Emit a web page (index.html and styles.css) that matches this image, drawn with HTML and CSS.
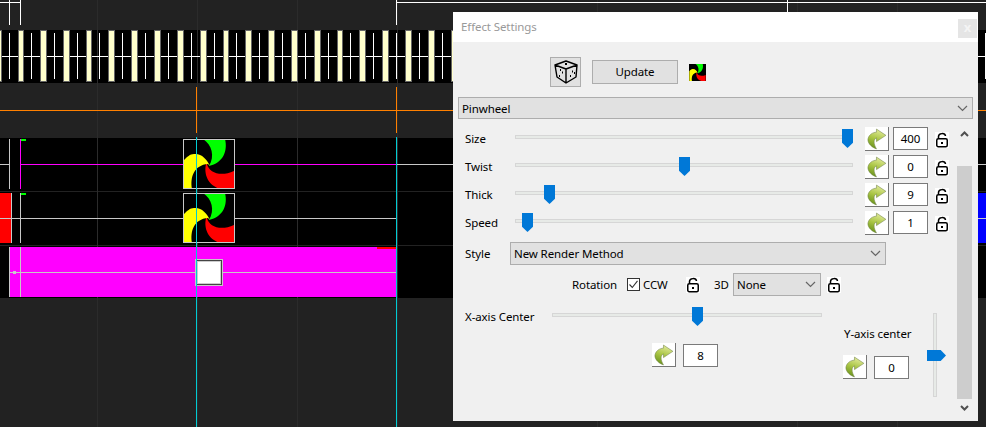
FILE: index.html
```html
<!DOCTYPE html>
<html lang="en">
<head>
  <meta charset="UTF-8">
  <title>Effect Settings</title>
  <link rel="stylesheet" href="styles.css">
</head>
<body>

<svg class="timeline" width="986" height="427" viewBox="0 0 986 427">
  <defs>
    <g id="pinwheel">
      <rect width="52" height="50" fill="#000"/>
      <path fill="#0f0" d="M20 0H42C45 12 40 24 26 27C32 17 29 6 20 0Z"/>
      <path fill="#f00" d="M24 25C26 34 38 38 51 32V50H38C28 48 20 38 23 25Z"/>
      <path fill="#ff0" d="M27 27C24 20 18 14 11 15C7 15 4 18 1 21V50H9C7 38 11 26 25 25Z"/>
    </g>
  </defs>

  <!-- rows -->
  <rect class="black" x="0" y="30" width="986" height="53"/>
  <rect class="black" x="0" y="138" width="986" height="53"/>
  <rect class="black" x="0" y="192" width="986" height="53"/>
  <rect class="black" x="0" y="246" width="986" height="52"/>

  <!-- grid -->
  <rect class="grid" x="97" y="0" width="1" height="427"/>
  <rect class="grid" x="197" y="0" width="1" height="427"/>
  <rect class="grid" x="297" y="0" width="1" height="427"/>
  <rect class="grid" x="397" y="0" width="1" height="427"/>
  <rect class="grid" x="597" y="0" width="1" height="427"/>
  <rect class="grid" x="797" y="0" width="1" height="427"/>
  <rect class="grid" x="897" y="0" width="1" height="427"/>

  <!-- top marks -->
  <rect class="mark" x="0" y="2" width="21" height="1"/>
  <rect class="mark" x="9" y="0" width="1" height="25"/>
  <rect class="mark" x="20" y="0" width="1" height="25"/>
  <rect class="mark" x="396" y="2" width="590" height="1"/>
  <rect class="mark" x="396" y="0" width="1" height="25"/>
  <rect class="mark" x="787" y="0" width="1" height="12"/>

  <!-- timing track -->
  <rect class="mark" x="0" y="56" width="986" height="1"/>
  <rect class="mark" x="9" y="33" width="1" height="46"/>
  <rect class="mark" x="31" y="33" width="1" height="46"/>
  <rect class="mark" x="54" y="33" width="1" height="46"/>
  <rect class="mark" x="77" y="33" width="1" height="46"/>
  <rect class="mark" x="99" y="33" width="1" height="46"/>
  <rect class="mark" x="122" y="33" width="1" height="46"/>
  <rect class="mark" x="145" y="33" width="1" height="46"/>
  <rect class="mark" x="168" y="33" width="1" height="46"/>
  <rect class="mark" x="191" y="33" width="1" height="46"/>
  <rect class="mark" x="214" y="33" width="1" height="46"/>
  <rect class="mark" x="236" y="33" width="1" height="46"/>
  <rect class="mark" x="259" y="33" width="1" height="46"/>
  <rect class="mark" x="282" y="33" width="1" height="46"/>
  <rect class="mark" x="305" y="33" width="1" height="46"/>
  <rect class="mark" x="328" y="33" width="1" height="46"/>
  <rect class="mark" x="350" y="33" width="1" height="46"/>
  <rect class="mark" x="373" y="33" width="1" height="46"/>
  <rect class="mark" x="396" y="33" width="1" height="46"/>
  <rect class="mark" x="419" y="33" width="1" height="46"/>
  <rect class="mark" x="442" y="33" width="1" height="46"/>
  <rect class="mark" x="985" y="33" width="1" height="46"/>

  <rect class="beat" x="-4.5" y="30.5" width="6" height="51"/>
  <rect class="beat" x="18.5" y="30.5" width="5" height="51"/>
  <rect class="beat" x="40.5" y="30.5" width="6" height="51"/>
  <rect class="beat" x="63.5" y="30.5" width="6" height="51"/>
  <rect class="beat" x="86.5" y="30.5" width="5" height="51"/>
  <rect class="beat" x="108.5" y="30.5" width="6" height="51"/>
  <rect class="beat" x="131.5" y="30.5" width="6" height="51"/>
  <rect class="beat" x="154.5" y="30.5" width="6" height="51"/>
  <rect class="beat" x="177.5" y="30.5" width="6" height="51"/>
  <rect class="beat" x="200.5" y="30.5" width="6" height="51"/>
  <rect class="beat" x="223.5" y="30.5" width="5" height="51"/>
  <rect class="beat" x="245.5" y="30.5" width="6" height="51"/>
  <rect class="beat" x="268.5" y="30.5" width="6" height="51"/>
  <rect class="beat" x="291.5" y="30.5" width="6" height="51"/>
  <rect class="beat" x="314.5" y="30.5" width="6" height="51"/>
  <rect class="beat" x="337.5" y="30.5" width="5" height="51"/>
  <rect class="beat" x="359.5" y="30.5" width="6" height="51"/>
  <rect class="beat" x="382.5" y="30.5" width="6" height="51"/>
  <rect class="beat" x="405.5" y="30.5" width="6" height="51"/>
  <rect class="beat" x="428.5" y="30.5" width="6" height="51"/>
  <rect class="beat" x="451.5" y="30.5" width="6" height="51"/>

  <!-- orange marker -->
  <rect class="orange" x="0" y="110" width="986" height="1"/>
  <rect class="orange" x="196" y="87" width="1" height="46"/>
  <rect class="orange" x="396" y="87" width="1" height="46"/>

  <!-- row 1 -->
  <rect class="line" x="0" y="164" width="9" height="1"/>
  <rect class="line" x="9" y="139" width="1" height="50"/>
  <rect class="pink" x="20" y="139" width="1" height="50"/>
  <rect class="green" x="21" y="139" width="5" height="2"/>
  <rect class="pink" x="20" y="164" width="376" height="1"/>
  <rect class="line" x="396" y="164" width="590" height="1"/>
  <use href="#pinwheel" x="183" y="139"/>
  <rect class="frame" x="183.5" y="139.5" width="51" height="49"/>

  <!-- row 2 -->
  <rect class="red" x="0" y="193" width="11" height="50"/>
  <rect class="line" x="11" y="193" width="1" height="50"/>
  <rect class="line" x="0" y="218" width="396" height="1"/>
  <rect class="line" x="20" y="193" width="1" height="50"/>
  <rect class="green" x="21" y="193" width="5" height="2"/>
  <use href="#pinwheel" x="183" y="193"/>
  <rect class="frame" x="183.5" y="193.5" width="51" height="49"/>
  <rect class="blue" x="978" y="193" width="8" height="50"/>
  <rect class="line" x="978" y="218" width="8" height="1"/>

  <!-- row 3 -->
  <rect class="pink" x="9" y="247" width="387" height="50"/>
  <rect class="line" x="9" y="247" width="1" height="50"/>
  <rect class="line" x="20" y="247" width="1" height="50"/>
  <rect class="line" x="9" y="272" width="387" height="1"/>
  <rect class="frame" x="13.5" y="271.5" width="2" height="2"/>
  <rect class="red" x="377" y="247" width="19" height="2"/>
  <rect class="line" x="195" y="259" width="28" height="27"/>
  <rect fill="#444" x="196" y="260" width="26" height="25"/>
  <rect fill="#ccc" x="197" y="261" width="24" height="23"/>
  <rect fill="#fff" x="198" y="262" width="22" height="21"/>

  <!-- playhead -->
  <rect class="cyan" x="196" y="137" width="1" height="290"/>
  <rect class="cyan" x="396" y="137" width="1" height="290"/>
</svg>

<div class="dialog">
  <div class="dialog-title">
    <span>Effect Settings</span>
    <div class="close-btn">x</div>
  </div>
  <div class="dialog-body">
    <div class="toolbar">
      <div class="dice-btn">
        <svg width="24" height="24" viewBox="3 3 24 24" fill="none" stroke="#000" stroke-width="1.4" stroke-linejoin="round">
          <path d="M15 4L26 8L25 20L15 26L6 20L4 8ZM4 8L15 12L26 8M15 12V26"/>
          <path stroke-width="2" d="M14 7h2M9 13h1M11 15.5h1M8 19h1M21 14.5h1M19 19h1M23 16h1"/>
        </svg>
      </div>
      <div class="update-btn">Update</div>
      <svg class="effect-icon" width="17" height="17" viewBox="0 0 52 50" preserveAspectRatio="none"><use href="#pinwheel"/></svg>
    </div>

    <div class="combo combo-effect">
      <span>Pinwheel</span>
      <svg class="chevron" width="11" height="7" viewBox="0 0 11 7"><path d="M1 1L5.5 5.5L10 1" fill="none" stroke="#666" stroke-width="1.2"/></svg>
    </div>

    <div class="panel">
      <div class="settings">
        <div class="slider-row">
          <label class="row-label">Size</label>
          <div class="slider"><div class="track"></div><div class="thumb" style="left: 327px"></div></div>
          <button class="arrow-btn"><svg width="22" height="22" viewBox="1 1 21 21"><use href="#arrow"/></svg></button>
          <input class="num" type="text" value="400">
          <svg class="lock" width="14" height="16" viewBox="0 0 14 16"><use href="#lock"/></svg>
        </div>
        <div class="slider-row">
          <label class="row-label">Twist</label>
          <div class="slider"><div class="track"></div><div class="thumb" style="left: 164px"></div></div>
          <button class="arrow-btn"><svg width="22" height="22" viewBox="1 1 21 21"><use href="#arrow"/></svg></button>
          <input class="num" type="text" value="0">
          <svg class="lock" width="14" height="16" viewBox="0 0 14 16"><use href="#lock"/></svg>
        </div>
        <div class="slider-row">
          <label class="row-label">Thick</label>
          <div class="slider"><div class="track"></div><div class="thumb" style="left: 29px"></div></div>
          <button class="arrow-btn"><svg width="22" height="22" viewBox="1 1 21 21"><use href="#arrow"/></svg></button>
          <input class="num" type="text" value="9">
          <svg class="lock" width="14" height="16" viewBox="0 0 14 16"><use href="#lock"/></svg>
        </div>
        <div class="slider-row">
          <label class="row-label">Speed</label>
          <div class="slider"><div class="track"></div><div class="thumb" style="left: 7px"></div></div>
          <button class="arrow-btn"><svg width="22" height="22" viewBox="1 1 21 21"><use href="#arrow"/></svg></button>
          <input class="num" type="text" value="1">
          <svg class="lock" width="14" height="16" viewBox="0 0 14 16"><use href="#lock"/></svg>
        </div>

        <div class="style-row">
          <label class="style-label">Style</label>
          <div class="combo combo-style">
            <span>New Render Method</span>
            <svg class="chevron" width="11" height="7" viewBox="0 0 11 7"><path d="M1 1L5.5 5.5L10 1" fill="none" stroke="#666" stroke-width="1.2"/></svg>
          </div>
        </div>

        <div class="rotation-row">
          <label class="rotation-label">Rotation</label>
          <div class="check">
            <svg width="11" height="11" viewBox="0 0 11 11"><path d="M1.5 5.5L4.3 8.5L9.5 1.8" fill="none" stroke="#333" stroke-width="1.1"/></svg>
          </div>
          <label class="ccw-label">CCW</label>
          <svg class="lock" width="14" height="16" viewBox="0 0 14 16"><use href="#lock"/></svg>
          <label class="threed-label">3D</label>
          <div class="combo combo-3d">
            <span>None</span>
            <svg class="chevron" width="11" height="7" viewBox="0 0 11 7"><path d="M1 1L5.5 5.5L10 1" fill="none" stroke="#666" stroke-width="1.2"/></svg>
          </div>
          <svg class="lock lock-3d" width="14" height="16" viewBox="0 0 14 16"><use href="#lock"/></svg>
        </div>

        <div class="center-block">
          <div class="x-axis">
            <div class="x-slider-row">
              <label class="x-label">X-axis Center</label>
              <div class="slider slider-x"><div class="track"></div><div class="thumb" style="left: 140px"></div></div>
            </div>
            <div class="value-row x-value">
              <button class="arrow-btn"><svg width="22" height="22" viewBox="1 1 21 21"><use href="#arrow"/></svg></button>
              <input class="num" type="text" value="8">
            </div>
          </div>
          <div class="y-axis">
            <div class="y-column">
              <label class="y-label">Y-axis center</label>
              <div class="value-row y-value">
                <button class="arrow-btn"><svg width="22" height="22" viewBox="1 1 21 21"><use href="#arrow"/></svg></button>
                <input class="num" type="text" value="0">
              </div>
            </div>
            <div class="v-slider"><div class="v-track"></div><div class="v-thumb" style="top: 37px"></div></div>
          </div>
        </div>
      </div>

      <div class="scrollbar">
        <svg class="scroll-arrow" width="9" height="6" viewBox="0 0 9 6"><path d="M1 5L4.5 1.5L8 5" fill="none" stroke="#505050" stroke-width="2"/></svg>
        <div class="scroll-space"><div class="scroll-thumb"></div></div>
        <svg class="scroll-arrow" width="9" height="6" viewBox="0 0 9 6"><path d="M1 1L4.5 4.5L8 1" fill="none" stroke="#505050" stroke-width="2"/></svg>
      </div>
    </div>
  </div>
</div>

<svg class="sprites" width="0" height="0">
  <defs>
    <linearGradient id="arrow-fill" x1="0.6" y1="0" x2="0.3" y2="1">
      <stop offset="0" stop-color="#e4ec9c"/>
      <stop offset="0.5" stop-color="#a9c544"/>
      <stop offset="1" stop-color="#67901a"/>
    </linearGradient>
    <g id="arrow">
      <path fill="url(#arrow-fill)" stroke="#6d7f45" stroke-width="0.5" d="M11 2L20 8L11 14V10.5C8 11.5 8 16 11 21C5 19 2 14 3 11C4 7 8 5 11 5Z"/>
    </g>
    <g id="lock">
      <rect width="14" height="16" fill="#fff"/>
      <path d="M3.5 6.5V4.5C3.5 1 10 0.5 10.5 4" fill="none" stroke="#000" stroke-width="1.5"/>
      <rect x="1.75" y="6.75" width="10.5" height="8" rx="1.5" fill="#fff" stroke="#000" stroke-width="1.5"/>
      <rect x="6" y="10" width="2" height="2" fill="#000"/>
    </g>
  </defs>
</svg>

</body>
</html>
```

FILE: styles.css
```css
body {
  margin: 0;
  background: #222;
  font-family: "Noto Sans", Arial, sans-serif;
  font-size: 11.5px;
  letter-spacing: -0.1px;
  color: #000;
  overflow: hidden;
}

/* timeline behind the dialog */
.timeline {
  display: block;
}
.black { fill: #000; }
.grid { fill: #2b2b2b; }
.mark { fill: #fff; }
.line { fill: #c8c8c8; }
.beat { fill: #ffffcc; stroke: #666; stroke-width: 1; }
.orange { fill: #ff8000; }
.pink { fill: #ff00ff; }
.green { fill: #00ff00; }
.red { fill: #ff0000; }
.blue { fill: #0000ff; }
.cyan { fill: #00ccd4; }
.frame { fill: none; stroke: #c8c8c8; stroke-width: 1; }

.sprites {
  position: absolute;
}

/* dialog */
.dialog {
  position: absolute;
  left: 453px;
  top: 12px;
  width: 525px;
  height: 409px;
  background: #f0f0f0;
}
.dialog-title {
  display: flex;
  justify-content: space-between;
  height: 30px;
  line-height: 30px;
  padding: 0 1px 0 8px;
  background: #fff;
  color: #999;
}
.close-btn {
  width: 19px;
  height: 19px;
  margin-top: 7px;
  background: #e5e5e5;
  color: #f4f4f4;
  font-weight: bold;
  font-size: 13px;
  line-height: 17px;
  text-align: center;
}
.dialog-body {
  padding: 15px 5px 0;
}

.toolbar {
  display: flex;
  align-items: center;
  height: 30px;
  padding-left: 92px;
}
.dice-btn {
  box-sizing: border-box;
  display: flex;
  align-items: center;
  justify-content: center;
  width: 31px;
  height: 30px;
  background: #e1e1e1;
  border: 1px solid #adadad;
}
.update-btn {
  box-sizing: border-box;
  width: 86px;
  height: 24px;
  margin-left: 11px;
  line-height: 22px;
  text-align: center;
  background: #e1e1e1;
  border: 1px solid #adadad;
}
.effect-icon {
  margin-left: 11px;
}

.combo {
  box-sizing: border-box;
  display: flex;
  align-items: center;
  justify-content: space-between;
  padding: 0 4px 0 3px;
  background: #e1e1e1;
  border: 1px solid #adadad;
}
.combo-effect {
  height: 22px;
  margin-top: 10px;
}
.combo-style {
  width: 376px;
  height: 23px;
}
.combo-3d {
  width: 88px;
  height: 23px;
}
.chevron {
  flex: none;
}

.panel {
  display: flex;
  height: 302px;
}
.settings {
  width: 499px;
  padding-top: 6px;
  box-sizing: border-box;
}

.slider-row {
  display: flex;
  align-items: center;
  height: 28px;
  padding: 0 0 0 7px;
  box-sizing: border-box;
}
.row-label {
  width: 50px;
  margin-bottom: 2px;
}
.slider {
  position: relative;
  width: 338px;
  height: 19px;
  margin-right: 12px;
}
.slider-row .slider,
.slider-row .num {
  margin-bottom: 1px;
}
.track {
  position: absolute;
  left: 0;
  right: 0;
  top: 6px;
  height: 4px;
  box-sizing: border-box;
  background: #e7eae7;
  border: 1px solid #d6d6d6;
}
.thumb {
  position: absolute;
  top: 0;
  width: 11px;
  height: 19px;
  background: #0078d7;
  clip-path: polygon(0 0, 100% 0, 100% 72%, 50% 100%, 0 72%);
}

.arrow-btn {
  box-sizing: border-box;
  display: flex;
  align-items: center;
  justify-content: center;
  flex: none;
  width: 24px;
  height: 24px;
  padding: 0;
  background: #fff;
  border: none;
  border-right: 1px solid #777;
  border-bottom: 1px solid #777;
}
.num {
  box-sizing: border-box;
  flex: none;
  width: 35px;
  height: 23px;
  margin-left: 4px;
  padding: 0;
  background: #fff;
  border: 1px solid #7a7a7a;
  font: inherit;
  text-align: center;
}
.lock {
  flex: none;
}
.slider-row .lock {
  margin-left: 7px;
  margin-top: 1px;
}

.style-row {
  display: flex;
  align-items: center;
  margin-top: 5px;
  padding-left: 7px;
}
.style-label {
  width: 45px;
}

.rotation-row {
  display: flex;
  align-items: center;
  height: 23px;
  margin-top: 8px;
  padding-left: 114px;
}
.rotation-label {
  width: 55px;
}
.check {
  box-sizing: border-box;
  display: flex;
  align-items: center;
  justify-content: center;
  width: 13px;
  height: 13px;
  background: #fff;
  border: 1px solid #333;
}
.ccw-label {
  width: 43px;
  margin-left: 3px;
}
.threed-label {
  width: 19px;
  margin-left: 14px;
}
.lock-3d {
  margin-left: 6px;
}

.center-block {
  display: flex;
}
.x-axis {
  width: 385px;
  box-sizing: border-box;
  padding-left: 7px;
}
.x-slider-row {
  display: flex;
  align-items: center;
  margin-top: 11px;
}
.x-label {
  width: 87px;
}
.slider-x {
  width: 270px;
  margin-right: 0;
}
.value-row {
  display: flex;
  align-items: flex-start;
}
.value-row .num {
  margin-left: 7px;
  margin-top: 1px;
}
.x-value {
  margin-top: 17px;
  padding-left: 187px;
}

.y-axis {
  display: flex;
}
.y-column {
  width: 84px;
  padding-top: 30px;
}
.y-label {
  display: block;
  height: 16px;
  line-height: 16px;
  padding-left: 1px;
  white-space: nowrap;
}
.y-value {
  margin-top: 13px;
}
.v-slider {
  position: relative;
  width: 19px;
  height: 84px;
  margin-top: 17px;
}
.v-track {
  position: absolute;
  left: 6px;
  top: 0;
  bottom: 0;
  width: 4px;
  box-sizing: border-box;
  background: #e7eae7;
  border: 1px solid #d6d6d6;
}
.v-thumb {
  position: absolute;
  left: 0;
  width: 19px;
  height: 11px;
  background: #0078d7;
  clip-path: polygon(0 0, 72% 0, 100% 50%, 72% 100%, 0 100%);
}

.scrollbar {
  display: flex;
  flex-direction: column;
  align-items: center;
  width: 15px;
  height: 292px;
  margin-top: 6px;
}
.scroll-arrow {
  flex: none;
  margin: 6px 0;
}
.scroll-space {
  flex: 1;
  width: 100%;
  padding-top: 23px;
  box-sizing: border-box;
}
.scroll-thumb {
  height: 100%;
  background: #cdcdcd;
}
```
